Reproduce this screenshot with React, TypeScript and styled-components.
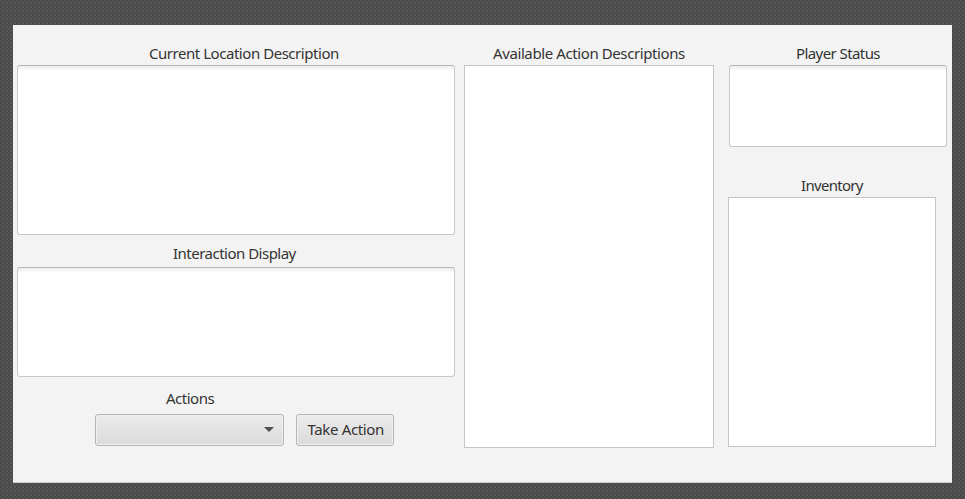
import React from "react";
import styled, { createGlobalStyle } from "styled-components";

const GlobalStyle = createGlobalStyle`
  * { box-sizing: border-box; }
  body {
    margin: 0;
    overflow: hidden;
    font-family: "Noto Sans", "Open Sans", sans-serif;
    color: #333333;
  }
`;

const Desktop = styled.main`
  width: 965px;
  height: 499px;
  padding: 25px 13px 16px;
  background: conic-gradient(#484848 25%, #595959 0 50%, #484848 0 75%, #535353 0) 0 0 / 4px 4px;
`;

const Window = styled.section`
  width: 939px;
  height: 458px;
  padding: 18px 4px 0;
  display: grid;
  grid-template-columns: 438px 250px 219px;
  justify-content: space-between;
  background: #f3f3f3;
  border-bottom: 1px solid #c9cdcd;
`;

const Column = styled.div<{ $shift?: number }>`
  display: flex;
  flex-direction: column;
  margin-left: ${(p) => p.$shift ?? 0}px;
`;

const Label = styled.h2<{ $left: number; $top?: number; $gap?: number; $spacing: number }>`
  margin: ${(p) => p.$top ?? 0}px 0 ${(p) => p.$gap ?? 2}px ${(p) => p.$left}px;
  height: 20px;
  font-size: 15px;
  font-weight: 400;
  line-height: 21px;
  letter-spacing: ${(p) => p.$spacing}px;
  white-space: nowrap;
`;

const TextArea = styled.div<{ $width: number; $height: number }>`
  width: ${(p) => p.$width}px;
  height: ${(p) => p.$height}px;
  border: 1px solid #c8c8c8;
  border-top-color: #b7b7b7;
  border-radius: 3px;
  background: linear-gradient(#ededed, #ffffff 5px);
`;

const ListBox = styled.div<{ $width: number; $height: number; $left?: number }>`
  width: ${(p) => p.$width}px;
  height: ${(p) => p.$height}px;
  margin-left: ${(p) => p.$left ?? 0}px;
  border: 1px solid #c5c5c5;
  background: #ffffff;
`;

const Controls = styled.div`
  display: flex;
  gap: 12px;
  margin: 4px 0 0 78px;
`;

const Control = styled.button<{ $width: number }>`
  width: ${(p) => p.$width}px;
  height: 32px;
  padding: 0 9px 2px;
  display: flex;
  align-items: center;
  justify-content: flex-end;
  border: 1px solid #b5b5b5;
  border-radius: 3px;
  background: linear-gradient(#ececec, #dadada);
  box-shadow: inset 0 0 0 1px #f0f0f0;
  color: #333333;
  font: 400 15px/20px "Noto Sans", "Open Sans", sans-serif;
  letter-spacing: -0.35px;
  white-space: nowrap;
`;

const Arrow = styled.svg`
  width: 10px;
  height: 5px;
  margin-top: 1px;
  fill: #505050;
`;

export default function App() {
  return (
    <>
      <GlobalStyle />
      <Desktop>
        <Window>
          <Column>
            <Label $left={132} $spacing={-0.46}>Current Location Description</Label>
            <TextArea $width={438} $height={170} />
            <Label $left={156} $top={8} $gap={4} $spacing={-0.51}>Interaction Display</Label>
            <TextArea $width={438} $height={110} />
            <Label $left={149} $top={11} $spacing={-0.5}>Actions</Label>
            <Controls>
              <Control $width={189} aria-label="Actions">
                <Arrow viewBox="0 0 10 5"><path d="M0 0H10L5 5Z" /></Arrow>
              </Control>
              <Control $width={98}>Take Action</Control>
            </Controls>
          </Column>
          <Column $shift={-3}>
            <Label $left={29} $spacing={-0.4}>Available Action Descriptions</Label>
            <ListBox $width={250} $height={383} />
          </Column>
          <Column>
            <Label $left={67} $spacing={-0.58}>Player Status</Label>
            <TextArea $width={218} $height={82} />
            <Label $left={72} $top={28} $spacing={-0.7}>Inventory</Label>
            <ListBox $width={208} $height={250} $left={-1} />
          </Column>
        </Window>
      </Desktop>
    </>
  );
}
